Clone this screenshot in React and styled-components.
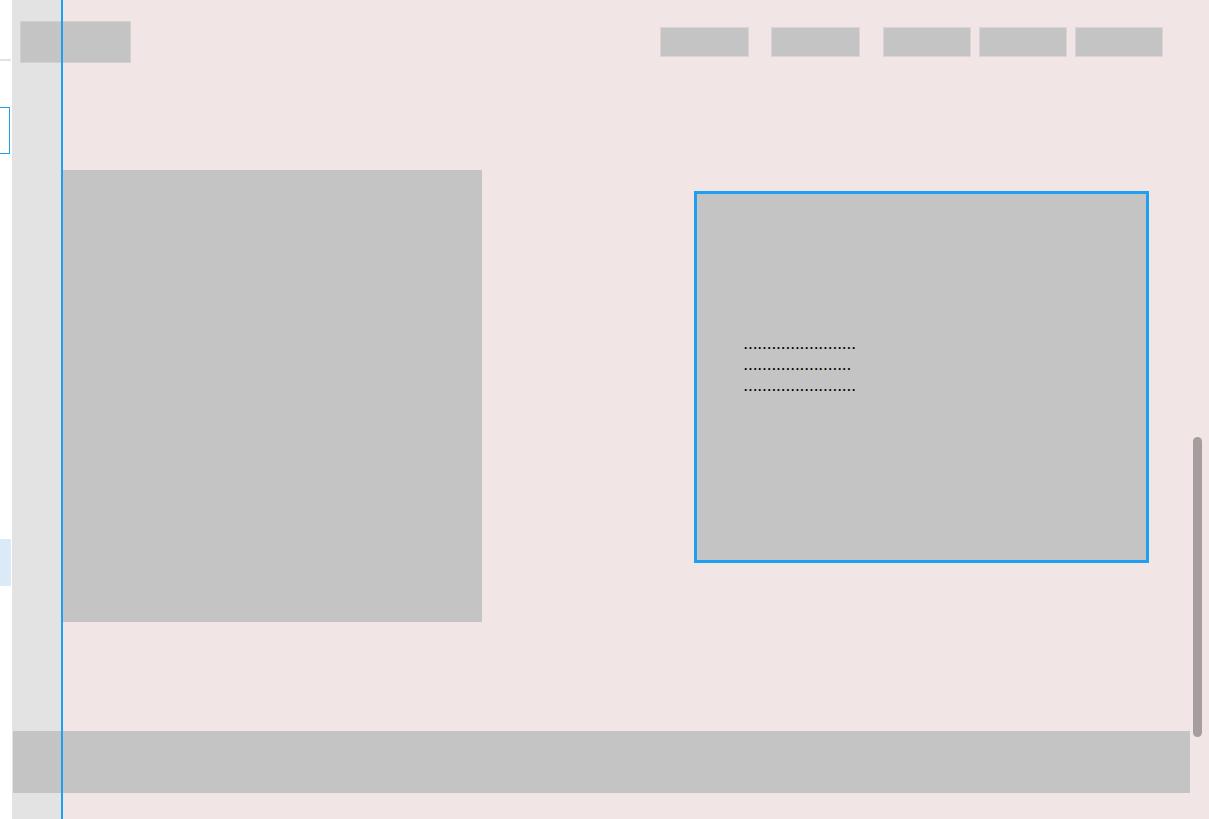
import React from "react";
import styled, { createGlobalStyle } from "styled-components";

const GlobalStyle = createGlobalStyle`
  html, body {
    margin: 0;
    padding: 0;
    height: 100%;
    overflow: hidden;
    font-family: "Liberation Sans", Arial, sans-serif;
  }
`;

const navItems = [
  { id: 1, gap: 0, w: 89 },
  { id: 2, gap: 22, w: 89 },
  { id: 3, gap: 23, w: 88 },
  { id: 4, gap: 8, w: 88 },
  { id: 5, gap: 8, w: 88 }
];

const dotLines = [24, 23, 24];

const App = () => {
  return (
    <Shell>
      <GlobalStyle />
      <SideStrip>
        <Divider />
        <SelectedTab />
        <HoverTab />
      </SideStrip>

      <Frame>
        <Header>
          <Logo />
          <Nav>
            {navItems.map((item) => (
              <NavItem key={item.id} $gap={item.gap} $w={item.w} />
            ))}
          </Nav>
        </Header>

        <Content>
          <HeroImage />
          <TextCard>
            <DotList>
              {dotLines.map((n, i) => (
                <DotLine key={i}>{".".repeat(n)}</DotLine>
              ))}
            </DotList>
          </TextCard>
        </Content>

        <Footer />

        {/* overlays: guide line and scroll thumb */}
        <Guide />
        <ScrollThumb />
      </Frame>
    </Shell>
  );
};

export default App;

const Shell = styled.div`
  display: flex;
  width: 1209px;
  height: 819px;
  overflow: hidden;
  background: #ffffff;
`;

const SideStrip = styled.aside`
  width: 12px;
  flex-shrink: 0;
  display: flex;
  flex-direction: column;
  background: #ffffff;
`;

const Divider = styled.div`
  width: 11px;
  height: 2px;
  margin-top: 59px;
  background: #e2e2e2;
`;

const SelectedTab = styled.div`
  width: 10px;
  height: 47px;
  margin-top: 46px;
  box-sizing: border-box;
  border: 1px solid #1e9ff2;
  border-left: none;
`;

const HoverTab = styled.div`
  width: 11px;
  height: 47px;
  margin-top: 385px;
  background: #dce9f6;
`;

const Frame = styled.main`
  position: relative;
  flex: 1;
  display: flex;
  flex-direction: column;
  background: linear-gradient(to right, #e3e3e3 0 49px, #f1e5e5 49px);
`;

const Header = styled.header`
  display: flex;
  align-items: flex-start;
  justify-content: space-between;
  padding: 21px 46px 0 8px;
`;

const Logo = styled.div`
  width: 111px;
  height: 42px;
  box-sizing: border-box;
  background: #c4c4c4;
  border: 1px solid #d3d0d0;
`;

const Nav = styled.nav`
  display: flex;
  margin-top: 6px;
`;

const NavItem = styled.div`
  width: ${(p) => p.$w}px;
  height: 30px;
  margin-left: ${(p) => p.$gap}px;
  box-sizing: border-box;
  background: #c4c4c4;
  border: 1px solid #dcd4d4;
`;

const Content = styled.section`
  display: flex;
  align-items: flex-start;
  justify-content: space-between;
  margin-top: 107px;
  padding: 0 60px 0 51px;
`;

const HeroImage = styled.div`
  width: 419px;
  height: 452px;
  background: #c4c4c4;
`;

const TextCard = styled.div`
  width: 455px;
  height: 372px;
  margin-top: 21px;
  box-sizing: border-box;
  background: #c4c4c4;
  border: 3px solid #1e9ff2;
  padding: 141px 0 0 47px;
`;

const DotList = styled.div`
  display: flex;
  flex-direction: column;
`;

const DotLine = styled.span`
  font-family: "Liberation Sans", Arial, sans-serif;
  font-size: 12px;
  font-weight: bold;
  line-height: 21px;
  letter-spacing: 1.36px;
  color: #000000;
`;

const Footer = styled.footer`
  height: 62px;
  margin: 109px 19px 0 1px;
  background: #c4c4c4;
`;

const Guide = styled.div`
  position: absolute;
  top: 0;
  bottom: 0;
  left: 49px;
  width: 2px;
  background: #1e9ff2;
`;

const ScrollThumb = styled.div`
  position: absolute;
  top: 437px;
  left: 1181px;
  width: 9px;
  height: 300px;
  border-radius: 5px;
  background: #a59d9e;
`;
